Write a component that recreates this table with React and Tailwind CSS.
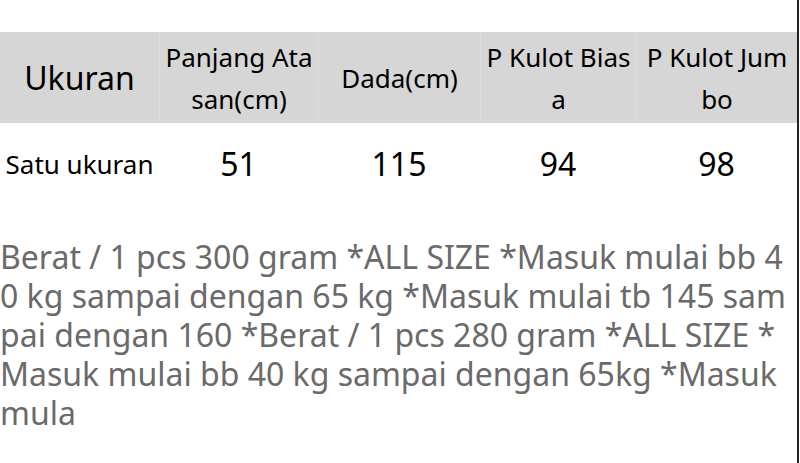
import React from "react";

const headers = ["Panjang Atasan(cm)", "Dada(cm)", "P Kulot Biasa", "P Kulot Jumbo"];
const values = ["51", "115", "94", "98"];

const note =
  "Berat / 1 pcs 300 gram *ALL SIZE *Masuk mulai bb 40 kg sampai dengan 65 kg *Masuk mulai tb 145 sampai dengan 160 *Berat / 1 pcs 280 gram *ALL SIZE *Masuk mulai bb 40 kg sampai dengan 65kg *Masuk mula";

export default function App() {
  return (
    <div className="flex min-h-[463px] w-[800px] bg-white font-['Noto_Sans',sans-serif] text-black">
      <div className="w-[797px] pt-[32px]">
        <div className="grid grid-cols-[159px_159px_162px_156px_161px] bg-[#d6d6d6]">
          <div className="flex h-[91px] items-center justify-center text-[32px] leading-none">
            Ukuran
          </div>
          {headers.map((h, i) => (
            <div
              key={i}
              className="flex h-[91px] items-center justify-center border-l border-[#dddddd] px-[5px] text-center text-[26px] leading-[42px] break-all"
            >
              {h}
            </div>
          ))}
        </div>
        <div className="grid grid-cols-[159px_159px_162px_156px_161px]">
          <div className="flex h-[82px] items-center justify-center text-[26px] leading-none whitespace-nowrap">
            Satu ukuran
          </div>
          {values.map((v, i) => (
            <div key={i} className="flex h-[82px] items-center justify-center text-[32px] leading-none">
              {v}
            </div>
          ))}
        </div>
        <p className="mt-[32px] pr-[2px] text-[32px] leading-[39px] text-[#6a6a6a] break-all">
          {note}
        </p>
      </div>
      <div className="w-[2px] bg-[#222222]" />
    </div>
  );
}
